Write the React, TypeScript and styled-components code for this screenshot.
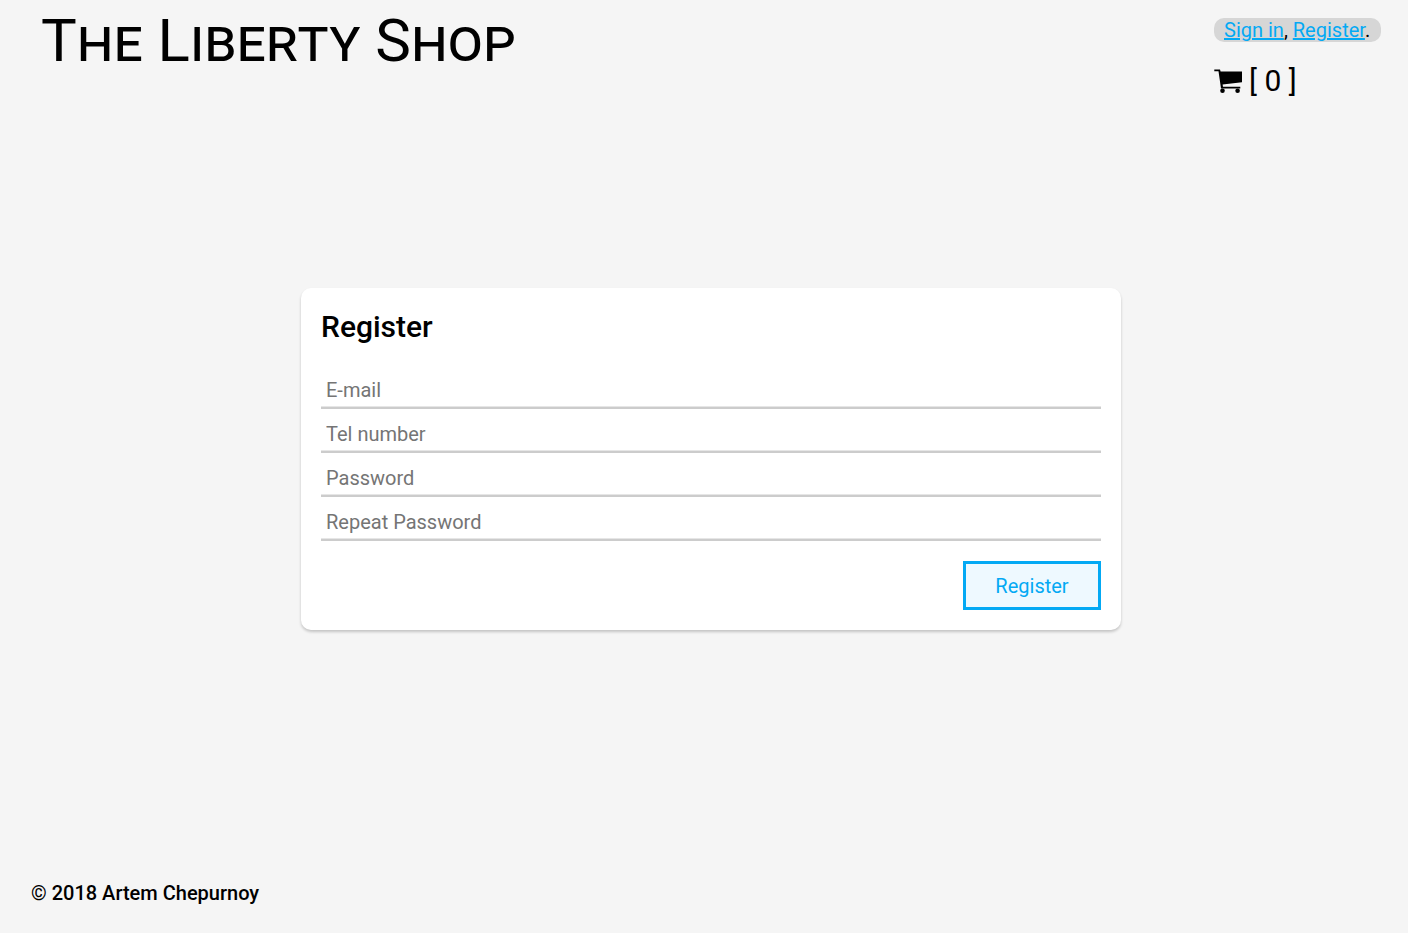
import React from 'react';
import styled, { createGlobalStyle } from 'styled-components';

const GlobalStyle = createGlobalStyle`
  *, *::before, *::after { box-sizing: border-box; }
  body {
    margin: 0;
    background: #f5f5f5;
    color: #000;
    font-family: Roboto, "Liberation Sans", sans-serif;
    font-size: 20px;
    line-height: 24px;
  }
`;

const Page = styled.div`
  display: flex;
  flex-direction: column;
  min-height: 100vh;
`;

const Header = styled.header`
  display: flex;
  justify-content: space-between;
  align-items: flex-start;
  padding: 6px 27px 0 41px;
`;

const Title = styled.h1`
  margin: 0;
  font-size: 60px;
  line-height: 70px;
  font-weight: 400;
  font-variant: small-caps;
`;

const Account = styled.div`
  display: flex;
  flex-direction: column;
  gap: 21px;
  min-width: 167px;
  padding-top: 12px;
`;

const AccountLinks = styled.nav`
  padding: 0 10px;
  border-radius: 10px;
  background: #d6d6d6;
`;

const Link = styled.a`
  color: #03a9f4;
  text-decoration: underline;
`;

const Cart = styled.div`
  display: flex;
  align-items: center;
  gap: 7px;
  font-size: 30px;
  line-height: 36px;
`;

const CartIcon = styled.svg`
  width: 28px;
  height: 26px;
`;

const Main = styled.main`
  flex: 1;
  display: flex;
  justify-content: center;
  align-items: center;
  padding: 0 27px 63px 41px;
`;

const Card = styled.form`
  display: flex;
  flex-direction: column;
  width: 100%;
  max-width: 820px;
  padding: 20px;
  border-radius: 10px;
  background: #fff;
  box-shadow: 0 2px 3px rgba(0, 0, 0, 0.2);
`;

const CardTitle = styled.h2`
  margin: 0 0 24px;
  font-size: 30px;
  line-height: 38px;
  font-weight: 500;
`;

const Fields = styled.div`
  display: flex;
  flex-direction: column;
  gap: 5px;
`;

const Field = styled.input`
  width: 100%;
  height: 39px;
  padding: 6px 5px 2px;
  border: 0;
  border-bottom: 2px solid #ccc;
  border-radius: 0;
  background: transparent;
  box-shadow: inset 0 -1px 0 #e6e6e6;
  color: #000;
  font: inherit;
  outline: none;

  &::placeholder {
    color: #757575;
    opacity: 1;
  }
`;

const SubmitButton = styled.button`
  align-self: flex-end;
  width: 138px;
  height: 49px;
  margin-top: 20px;
  padding: 1px 0 0;
  border: 3px solid #03a9f4;
  background: #eef9ff;
  color: #03a9f4;
  font: inherit;
  cursor: pointer;
`;

const Footer = styled.footer`
  padding: 0 31px 28px;
  font-weight: 500;
`;

const fields = [
  { name: 'email', type: 'email', label: 'E-mail' },
  { name: 'tel', type: 'tel', label: 'Tel number' },
  { name: 'password', type: 'password', label: 'Password' },
  { name: 'repeatPassword', type: 'password', label: 'Repeat Password' },
];

export default function App() {
  return (
    <Page>
      <GlobalStyle />
      <Header>
        <Title>The Liberty Shop</Title>
        <Account>
          <AccountLinks>
            <Link href="#sign-in">Sign in</Link>, <Link href="#register">Register</Link>.
          </AccountLinks>
          <Cart>
            <CartIcon viewBox="0 0 28 26" role="img" aria-label="Cart">
              <path d="M0.3 1.5H6L6.6 3.6H28V14.2L8.6 16.6L9 18.8H26.3V20.5H7L4.5 3.2H0.3Z" />
              <circle cx="8.5" cy="22.8" r="2.3" />
              <circle cx="23.6" cy="22.8" r="2.3" />
            </CartIcon>
            <span>[ 0 ]</span>
          </Cart>
        </Account>
      </Header>
      <Main>
        <Card>
          <CardTitle>Register</CardTitle>
          <Fields>
            {fields.map((field) => (
              <Field
                key={field.name}
                name={field.name}
                type={field.type}
                placeholder={field.label}
                aria-label={field.label}
              />
            ))}
          </Fields>
          <SubmitButton type="submit">Register</SubmitButton>
        </Card>
      </Main>
      <Footer>© 2018 Artem Chepurnoy</Footer>
    </Page>
  );
}
